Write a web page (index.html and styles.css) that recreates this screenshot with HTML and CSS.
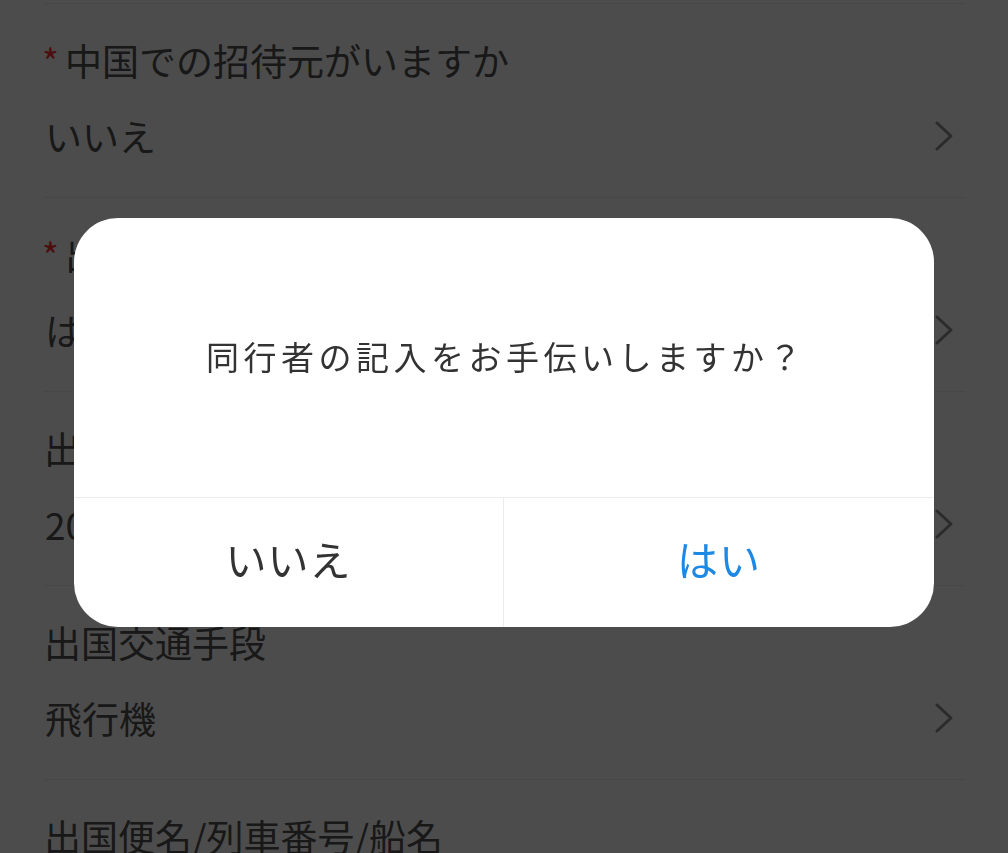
FILE: index.html
```html
<!DOCTYPE html>
<html lang="ja">
<head>
<meta charset="utf-8">
<title>出国情報</title>
<link rel="stylesheet" href="styles.css">
</head>
<body>
<div class="form">
  <div class="row">
    <div class="label"><span class="req">*</span>中国での招待元がいますか</div>
    <div class="value"><span>いいえ</span>
      <svg class="chev" viewBox="0 0 20 32"><path d="M3 3 L17 16 L3 29"/></svg>
    </div>
  </div>
  <div class="row">
    <div class="label"><span class="req">*</span>出国予定がありますか</div>
    <div class="value"><span>はい</span>
      <svg class="chev" viewBox="0 0 20 32"><path d="M3 3 L17 16 L3 29"/></svg>
    </div>
  </div>
  <div class="row">
    <div class="label">出国予定日</div>
    <div class="value"><span>2019-12-20</span>
      <svg class="chev" viewBox="0 0 20 32"><path d="M3 3 L17 16 L3 29"/></svg>
    </div>
  </div>
  <div class="row">
    <div class="label">出国交通手段</div>
    <div class="value"><span>飛行機</span>
      <svg class="chev" viewBox="0 0 20 32"><path d="M3 3 L17 16 L3 29"/></svg>
    </div>
  </div>
  <div class="row">
    <div class="label">出国便名/列車番号/船名</div>
  </div>
</div>

<div class="mask">
  <div class="dialog">
    <div class="message">同行者の記入をお手伝いしますか？</div>
    <div class="actions">
      <button class="btn btn-no">いいえ</button>
      <button class="btn btn-yes">はい</button>
    </div>
  </div>
</div>
</body>
</html>
```

FILE: styles.css
```css
html, body {
  margin: 0;
  padding: 0;
  background: #fff;
  overflow: hidden;
  height: 100%;
}

body {
  font-family: "Noto Sans CJK JP", "Noto Sans", sans-serif;
  color: #505050;
}

.form {
  padding: 3px 43px 0 44px;
}

.row {
  border-top: 1px solid #eee;
  padding: 36px 0 41px;
}

.label {
  font-size: 37px;
  line-height: 40px;
  height: 40px;
  white-space: nowrap;
  display: flex;
  align-items: center;
}

.req {
  color: #ff3030;
  font-size: 36px;
  width: 23px;
  margin-left: -2px;
}

.value {
  margin-top: 36px;
  height: 40px;
  font-size: 37px;
  line-height: 40px;
  display: flex;
  align-items: center;
  justify-content: space-between;
  padding-left: 1px;
}

.chev {
  width: 20px;
  height: 32px;
  margin-right: 11px;
  fill: none;
  stroke: #909090;
  stroke-width: 3;
  stroke-linecap: round;
  stroke-linejoin: round;
}

.mask {
  position: fixed;
  inset: 0;
  background: rgba(0, 0, 0, 0.7);
  display: flex;
  align-items: center;
  justify-content: center;
  padding-bottom: 8px;
  box-sizing: border-box;
}

.dialog {
  width: 860px;
  background: #fff;
  border-radius: 44px;
  overflow: hidden;
}

.message {
  height: 279px;
  display: flex;
  align-items: center;
  justify-content: center;
  font-size: 33px;
  letter-spacing: 4.5px;
  color: #333;
  padding: 0 0 4px 4px;
  box-sizing: border-box;
}

.actions {
  display: grid;
  grid-template-columns: 1fr 1fr;
  border-top: 1px solid #ececec;
  height: 130px;
  box-sizing: border-box;
}

.btn {
  border: 0;
  background: transparent;
  font-family: inherit;
  font-size: 41px;
  letter-spacing: 1px;
  padding: 0 0 9px;
  margin: 0;
}

.btn-no {
  color: #333;
  border-right: 1px solid #ececec;
}

.btn-yes {
  color: #1e88e5;
}
```
